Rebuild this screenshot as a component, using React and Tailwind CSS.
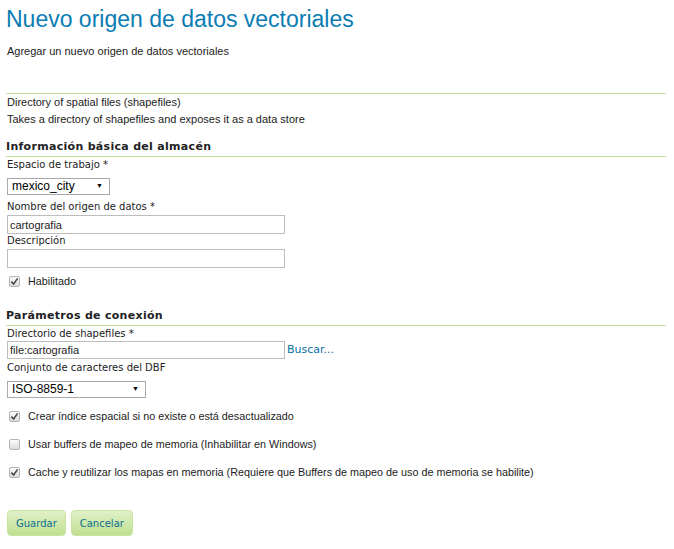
import { useState } from 'react';

const sans = { fontFamily: '"Liberation Sans", Arial, sans-serif' };
const deja = { fontFamily: '"DejaVu Sans", Verdana, sans-serif' };

function Label({ children }) {
  return (
    <div className="text-[10px] leading-[14px] text-[#222]" style={deja}>
      {children}
    </div>
  );
}

function Heading({ children }) {
  return (
    <div className="border-b border-[#c4df9b] pb-[1px]">
      <h2 className="text-[11px] leading-[16px] font-bold text-[#222] tracking-[0.3px]" style={deja}>
        {children}
      </h2>
    </div>
  );
}

function Select({ value, width }) {
  return (
    <div
      className={`flex items-center justify-between border border-[#a9a9a9] bg-white pl-[4px] pr-[6px] h-[17px] ${width}`}
    >
      <span className="text-[12px] leading-[15px] text-black" style={sans}>{value}</span>
      <span className="text-[7px] text-black">▼</span>
    </div>
  );
}

function Check({ checked, label }) {
  const [on, setOn] = useState(checked);
  return (
    <label className="flex items-center gap-[8px] pl-[3px] cursor-pointer">
      <span
        onClick={() => setOn(!on)}
        className="w-[11px] h-[11px] rounded-[2px] border border-[#b5b5b5] bg-gradient-to-b from-[#fbfbfb] to-[#dcdcdc] flex items-center justify-center"
      >
        {on && (
          <svg viewBox="0 0 10 10" className="w-[9px] h-[9px]">
            <path d="M1.5 5.2 L4 7.8 L8.5 1.5" fill="none" stroke="#4a4a4a" strokeWidth="1.8" />
          </svg>
        )}
      </span>
      <span className="text-[10.8px] leading-[14px] text-[#222]" style={sans}>{label}</span>
    </label>
  );
}

export default function App() {
  return (
    <div className="w-[674px] h-[549px] bg-white overflow-hidden px-[7px]" style={sans}>
      <h1 className="text-[23px] leading-[28px] text-[#0b7db3] pt-[5px] -ml-[1px]" style={sans}>
        Nuevo origen de datos vectoriales
      </h1>
      <p className="text-[11px] leading-[14px] text-[#222] mt-[11px]">
        Agregar un nuevo origen de datos vectoriales
      </p>

      <div className="mt-[35px] -ml-[1px] mr-[1px] border-t border-[#c4df9b]" />
      <div className="text-[11px] leading-[17px] text-[#222]">
        Directory of spatial files (shapefiles)
      </div>
      <div className="text-[11px] leading-[17px] text-[#222]">
        Takes a directory of shapefiles and exposes it as a data store
      </div>

      <div className="mt-[11px] -ml-[1px] mr-[1px]">
        <Heading>Información básica del almacén</Heading>
      </div>
      <div className="mt-[1px]">
        <Label>Espacio de trabajo *</Label>
      </div>
      <div className="mt-[6px]">
        <Select value="mexico_city" width="w-[103px]" />
      </div>
      <div className="mt-[5px]">
        <Label>Nombre del origen de datos *</Label>
      </div>
      <input
        defaultValue="cartografia"
        className="mt-[1px] block w-[278px] h-[19px] border border-[#bdbdbd] px-[2px] text-[11px] text-[#222] outline-none"
        style={sans}
      />
      <Label>Descripción</Label>
      <input
        className="mt-[1px] block w-[278px] h-[19px] border border-[#bdbdbd] px-[2px] text-[11px] outline-none"
        style={sans}
      />
      <div className="mt-[6px] -ml-[1px]">
        <Check checked label="Habilitado" />
      </div>

      <div className="mt-[20px] -ml-[1px] mr-[1px]">
        <Heading>Parámetros de conexión</Heading>
      </div>
      <div className="mt-[1px]">
        <Label>Directorio de shapefiles *</Label>
      </div>
      <div className="mt-[0px] flex items-center gap-[2px]">
        <input
          defaultValue="file:cartografia"
          className="block w-[278px] h-[18px] border border-[#bdbdbd] px-[2px] text-[11px] text-[#222] outline-none"
          style={sans}
        />
        <a className="text-[11px] text-[#0b6fa0]" style={deja}>Buscar...</a>
      </div>
      <div className="mt-[2px]">
        <Label>Conjunto de caracteres del DBF</Label>
      </div>
      <div className="mt-[6px]">
        <Select value="ISO-8859-1" width="w-[139px]" />
      </div>

      <div className="mt-[11px] flex flex-col gap-[14px] -ml-[1px]">
        <Check checked label="Crear índice espacial si no existe o está desactualizado" />
        <Check checked={false} label="Usar buffers de mapeo de memoria (Inhabilitar en Windows)" />
        <Check checked label="Cache y reutilizar los mapas en memoria (Requiere que Buffers de mapeo de uso de memoria se habilite)" />
      </div>

      <div className="mt-[31px] flex gap-[5px]">
        <button
          className="h-[26px] px-[8px] rounded-[4px] border border-[#c9e3a3] bg-gradient-to-b from-[#e0f0c8] to-[#c0e08f] text-[10px] text-[#0b6f8c]"
          style={deja}
        >
          Guardar
        </button>
        <button
          className="h-[26px] px-[8px] rounded-[4px] border border-[#c9e3a3] bg-gradient-to-b from-[#e0f0c8] to-[#c0e08f] text-[10px] text-[#0b6f8c]"
          style={deja}
        >
          Cancelar
        </button>
      </div>
    </div>
  );
}
